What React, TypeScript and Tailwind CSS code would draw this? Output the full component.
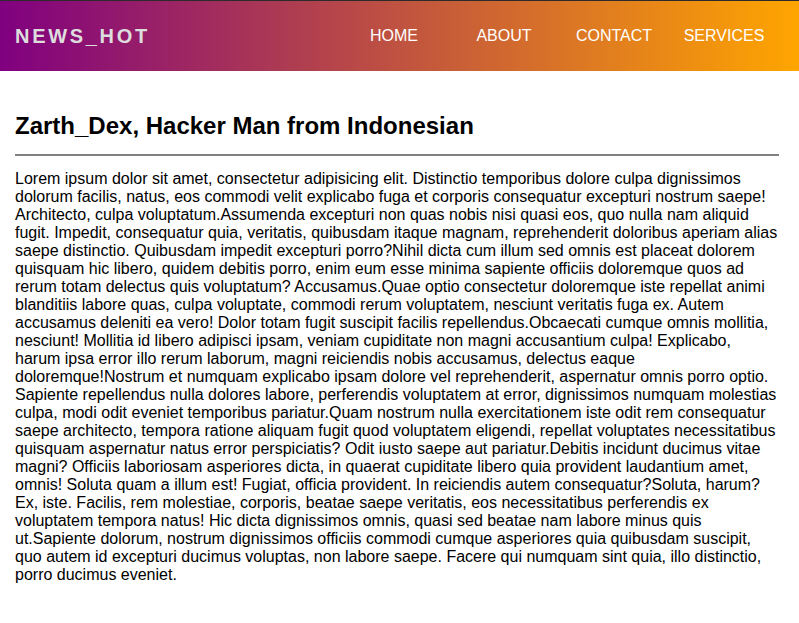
import React from "react";

const TEXT =
  "Lorem ipsum dolor sit amet, consectetur adipisicing elit. Distinctio temporibus dolore culpa dignissimos dolorum facilis, natus, eos commodi velit explicabo fuga et corporis consequatur excepturi nostrum saepe! Architecto, culpa voluptatum.Assumenda excepturi non quas nobis nisi quasi eos, quo nulla nam aliquid fugit. Impedit, consequatur quia, veritatis, quibusdam itaque magnam, reprehenderit doloribus aperiam alias saepe distinctio. Quibusdam impedit excepturi porro?Nihil dicta cum illum sed omnis est placeat dolorem quisquam hic libero, quidem debitis porro, enim eum esse minima sapiente officiis doloremque quos ad rerum totam delectus quis voluptatum? Accusamus.Quae optio consectetur doloremque iste repellat animi blanditiis labore quas, culpa voluptate, commodi rerum voluptatem, nesciunt veritatis fuga ex. Autem accusamus deleniti ea vero! Dolor totam fugit suscipit facilis repellendus.Obcaecati cumque omnis mollitia, nesciunt! Mollitia id libero adipisci ipsam, veniam cupiditate non magni accusantium culpa! Explicabo, harum ipsa error illo rerum laborum, magni reiciendis nobis accusamus, delectus eaque doloremque!Nostrum et numquam explicabo ipsam dolore vel reprehenderit, aspernatur omnis porro optio. Sapiente repellendus nulla dolores labore, perferendis voluptatem at error, dignissimos numquam molestias culpa, modi odit eveniet temporibus pariatur.Quam nostrum nulla exercitationem iste odit rem consequatur saepe architecto, tempora ratione aliquam fugit quod voluptatem eligendi, repellat voluptates necessitatibus quisquam aspernatur natus error perspiciatis? Odit iusto saepe aut pariatur.Debitis incidunt ducimus vitae magni? Officiis laboriosam asperiores dicta, in quaerat cupiditate libero quia provident laudantium amet, omnis! Soluta quam a illum est! Fugiat, officia provident. In reiciendis autem consequatur?Soluta, harum? Ex, iste. Facilis, rem molestiae, corporis, beatae saepe veritatis, eos necessitatibus perferendis ex voluptatem tempora natus! Hic dicta dignissimos omnis, quasi sed beatae nam labore minus quis ut.Sapiente dolorum, nostrum dignissimos officiis commodi cumque asperiores quia quibusdam suscipit, quo autem id excepturi ducimus voluptas, non labore saepe. Facere qui numquam sint quia, illo distinctio, porro ducimus eveniet.";

export default function App() {
  return (
    <div className="min-h-[623px] bg-white text-black font-['Liberation_Sans',Arial,sans-serif]">
      <header className="h-[71px] border-t border-[#2b2b2b] bg-[linear-gradient(to_right,#800080,#ffa500)] flex items-center pl-[15px] pr-[20px]">
        <div className="text-[20px] font-bold tracking-[2.7px] text-[#dddddd] leading-none">
          NEWS_HOT
        </div>
        <nav className="ml-auto flex">
          {["HOME", "ABOUT", "CONTACT", "SERVICES"].map((n) => (
            <a key={n} className="w-[110px] text-center text-[16px] text-white leading-none">
              {n}
            </a>
          ))}
        </nav>
      </header>
      <main className="pl-[15px] pr-[20px]">
        <h2 className="mt-[41px] text-[24px] font-bold leading-[27px]">
          Zarth_Dex, Hacker Man from Indonesian
        </h2>
        <div className="mt-[15px] h-[2px] bg-[#808080]" />
        <p className="mt-[14px] text-[16px] leading-[18px]">{TEXT}</p>
      </main>
    </div>
  );
}
